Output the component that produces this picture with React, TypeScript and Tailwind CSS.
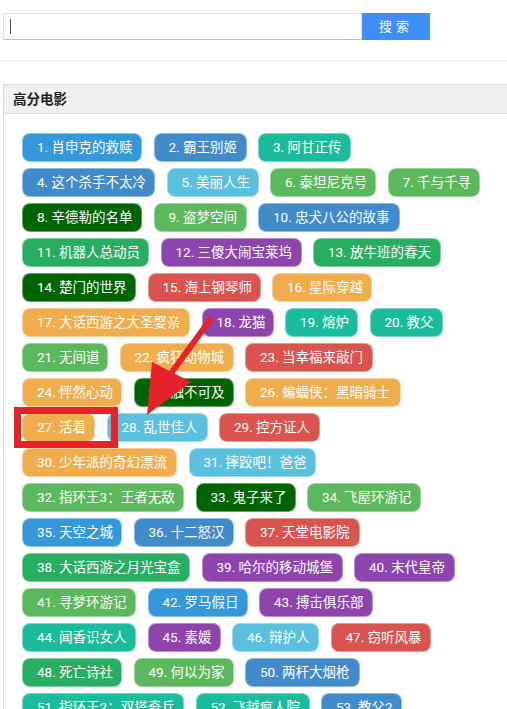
import React from "react";

type Tag = { n: number; t: string; c: string; w: string };

const C = {
  blue: "bg-[#3498db]",
  steel: "bg-[#428bca]",
  teal: "bg-[#1abc9c]",
  info: "bg-[#5bc0de]",
  green: "bg-[#5cb85c]",
  dark: "bg-[#006400]",
  emer: "bg-[#27ae60]",
  purple: "bg-[#8e44ad]",
  red: "bg-[#d9534f]",
  orange: "bg-[#f0ad4e]",
};

const rows: Tag[][] = [
  [
    { n: 1, t: "肖申克的救赎", c: C.blue, w: "w-[120px]" },
    { n: 2, t: "霸王别姬", c: C.steel, w: "w-[93px]" },
    { n: 3, t: "阿甘正传", c: C.teal, w: "w-[93px]" },
  ],
  [
    { n: 4, t: "这个杀手不太冷", c: C.steel, w: "w-[133px]" },
    { n: 5, t: "美丽人生", c: C.info, w: "w-[92px]" },
    { n: 6, t: "泰坦尼克号", c: C.green, w: "w-[106px]" },
    { n: 7, t: "千与千寻", c: C.green, w: "w-[92px]" },
  ],
  [
    { n: 8, t: "辛德勒的名单", c: C.dark, w: "w-[120px]" },
    { n: 9, t: "盗梦空间", c: C.green, w: "w-[93px]" },
    { n: 10, t: "忠犬八公的故事", c: C.steel, w: "w-[142px]" },
  ],
  [
    { n: 11, t: "机器人总动员", c: C.emer, w: "w-[127px]" },
    { n: 12, t: "三傻大闹宝莱坞", c: C.purple, w: "w-[141px]" },
    { n: 13, t: "放牛班的春天", c: C.emer, w: "w-[128px]" },
  ],
  [
    { n: 14, t: "楚门的世界", c: C.dark, w: "w-[114px]" },
    { n: 15, t: "海上钢琴师", c: C.red, w: "w-[113px]" },
    { n: 16, t: "星际穿越", c: C.orange, w: "w-[100px]" },
  ],
  [
    { n: 17, t: "大话西游之大圣娶亲", c: C.orange, w: "w-[168px]" },
    { n: 18, t: "龙猫", c: C.purple, w: "w-[72px]" },
    { n: 19, t: "熔炉", c: C.teal, w: "w-[73px]" },
    { n: 20, t: "教父", c: C.teal, w: "w-[73px]" },
  ],
  [
    { n: 21, t: "无间道", c: C.green, w: "w-[86px]" },
    { n: 22, t: "疯狂动物城", c: C.orange, w: "w-[114px]" },
    { n: 23, t: "当幸福来敲门", c: C.red, w: "w-[128px]" },
  ],
  [
    { n: 24, t: "怦然心动", c: C.orange, w: "w-[100px]" },
    { n: 25, t: "触不可及", c: C.dark, w: "w-[100px]" },
    { n: 26, t: "蝙蝠侠：黑暗骑士", c: C.orange, w: "w-[156px]" },
  ],
  [
    { n: 27, t: "活着", c: C.orange, w: "w-[73px]" },
    { n: 28, t: "乱世佳人", c: C.info, w: "w-[101px]" },
    { n: 29, t: "控方证人", c: C.red, w: "w-[101px]" },
  ],
  [
    { n: 30, t: "少年派的奇幻漂流", c: C.orange, w: "w-[155px]" },
    { n: 31, t: "摔跤吧！爸爸", c: C.info, w: "w-[127px]" },
  ],
  [
    { n: 32, t: "指环王3：王者无敌", c: C.green, w: "w-[162px]" },
    { n: 33, t: "鬼子来了", c: C.dark, w: "w-[100px]" },
    { n: 34, t: "飞屋环游记", c: C.green, w: "w-[114px]" },
  ],
  [
    { n: 35, t: "天空之城", c: C.blue, w: "w-[100px]" },
    { n: 36, t: "十二怒汉", c: C.steel, w: "w-[100px]" },
    { n: 37, t: "天堂电影院", c: C.red, w: "w-[115px]" },
  ],
  [
    { n: 38, t: "大话西游之月光宝盒", c: C.emer, w: "w-[168px]" },
    { n: 39, t: "哈尔的移动城堡", c: C.purple, w: "w-[141px]" },
    { n: 40, t: "末代皇帝", c: C.purple, w: "w-[101px]" },
  ],
  [
    { n: 41, t: "寻梦环游记", c: C.green, w: "w-[114px]" },
    { n: 42, t: "罗马假日", c: C.blue, w: "w-[100px]" },
    { n: 43, t: "搏击俱乐部", c: C.purple, w: "w-[114px]" },
  ],
  [
    { n: 44, t: "闻香识女人", c: C.teal, w: "w-[114px]" },
    { n: 45, t: "素媛", c: C.purple, w: "w-[73px]" },
    { n: 46, t: "辩护人", c: C.info, w: "w-[87px]" },
    { n: 47, t: "窃听风暴", c: C.red, w: "w-[100px]" },
  ],
  [
    { n: 48, t: "死亡诗社", c: C.emer, w: "w-[100px]" },
    { n: 49, t: "何以为家", c: C.green, w: "w-[100px]" },
    { n: 50, t: "两杆大烟枪", c: C.steel, w: "w-[115px]" },
  ],
  [
    { n: 51, t: "指环王2：双塔奇兵", c: C.teal, w: "w-[162px]" },
    { n: 52, t: "飞越疯人院", c: C.teal, w: "w-[114px]" },
    { n: 53, t: "教父2", c: C.steel, w: "w-[81px]" },
  ],
];

export default function App() {
  return (
    <div className="relative w-[507px] h-[709px] overflow-hidden bg-white font-['Roboto','Noto_Sans_CJK_SC',sans-serif]">
      {/* search bar */}
      <div className="flex pt-[13px] pl-[3px]">
        <div className="flex h-[27px] w-[359px] items-center border border-[#d6e1ec] border-b-[#adc3dd] bg-white pl-[6px]">
          <span className="block h-[15px] w-px bg-[#555]" />
        </div>
        <button className="h-[27px] w-[68px] bg-[#3d8ef5] text-[13px] tracking-[4px] text-white">
          搜索
        </button>
      </div>

      <div className="mt-[20px] h-px bg-[#eeeeee]" />

      {/* panel */}
      <div className="ml-[3px] mt-[23px] border-l border-t border-[#dddddd]">
        <div className="flex h-[29px] items-center border-b border-[#dddddd] bg-[#f0f0f0] pl-[9px] text-[13.5px] font-bold text-[#222]">
          高分电影
        </div>
        <div className="flex flex-col gap-[6px] pl-[18px] pt-[19px]">
          {rows.map((row, i) => (
            <div key={i} className="flex gap-[11.5px]">
              {row.map((tag) => (
                <div
                  key={tag.n}
                  className={`flex h-[29px] shrink-0 items-center whitespace-nowrap rounded-[8px] border border-white/40 pl-[14px] text-[13.5px] text-white ${tag.c} ${tag.w}`}
                >
                  {tag.n}. {tag.t}
                </div>
              ))}
            </div>
          ))}
        </div>
      </div>

      {/* annotation overlay */}
      <div className="absolute left-[14px] top-[407px] h-[41px] w-[104px] border-[7px] border-[#e5222a]" />
      <svg
        className="absolute left-0 top-0"
        width="507"
        height="709"
        viewBox="0 0 507 709"
      >
        <line x1="210" y1="320" x2="172" y2="372" stroke="#e5222a" strokeWidth="6" strokeLinecap="round" />
        <polygon points="147,415 152,362 191,382" fill="#e5222a" />
      </svg>
    </div>
  );
}
